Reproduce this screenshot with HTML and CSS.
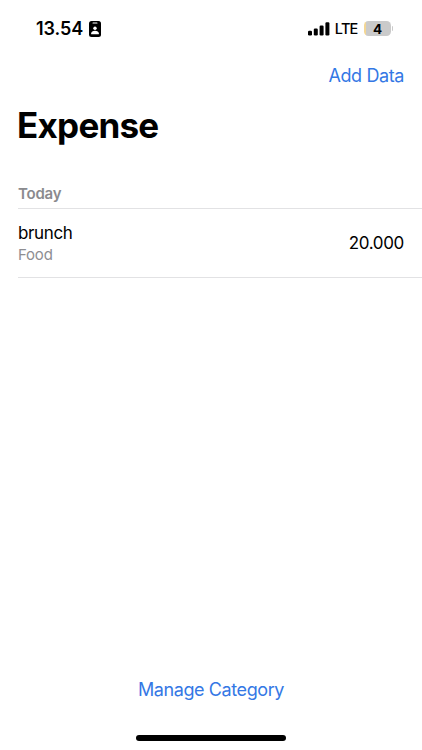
FILE: index.html
```html
<!DOCTYPE html>
<html lang="en">
<head>
<meta charset="utf-8">
<title>Expense</title>
<link rel="stylesheet" href="styles.css">
</head>
<body>
<div class="status">
  <div class="status-left"><span class="time">13.54</span>
    <svg class="badge" width="12" height="16" viewBox="0 0 12 16"><rect width="12" height="16" rx="2.5"/><rect x="3.5" y="1.4" width="5" height="1.1" rx=".55" fill="#fff"/><circle cx="6" cy="7.2" r="1.7" fill="#fff"/><path d="M2.2 13.2v-1c0-1.5 1.6-2.5 3.8-2.5s3.8 1 3.8 2.5v1z" fill="#fff"/></svg>
  </div>
  <div class="status-right">
    <svg class="signal" width="22" height="14" viewBox="0 0 22 14"><rect x="0" y="8.8" width="4" height="4.7" rx="1.2"/><rect x="5.8" y="6.5" width="4" height="7" rx="1.2"/><rect x="11.6" y="3.6" width="4" height="9.9" rx="1.2"/><rect x="17.4" y="0.3" width="4" height="13.2" rx="1.2"/></svg>
    <span class="lte">LTE</span>
    <span class="battery"><span class="level">4</span></span>
  </div>
</div>
<nav class="nav"><a class="link">Add Data</a></nav>
<h1 class="title">Expense</h1>
<main class="list">
  <h2 class="section">Today</h2>
  <div class="row">
    <div class="info"><span class="name">brunch</span><span class="category">Food</span></div>
    <span class="amount">20.000</span>
  </div>
</main>
<footer class="footer"><a class="link manage">Manage Category</a><div class="home"></div></footer>
</body>
</html>
```
FILE: styles.css
```css
* { box-sizing: border-box; }
body { margin: 0; height: 750px; display: flex; flex-direction: column; background: #fff; color: #000; font-family: Inter, sans-serif; overflow: hidden; }
.status { height: 57px; padding: 0 31px 0 36px; display: flex; justify-content: space-between; align-items: center; }
.status-left, .status-right { display: flex; align-items: center; }
.time { font-size: 18px; font-weight: 600; margin-right: 6px; letter-spacing: -0.05px; }
.lte { font-size: 14.5px; font-weight: 500; letter-spacing: -0.8px; margin: 0 6.5px 0 5px; }
.battery { width: 27px; height: 15px; border-radius: 4.5px; background: linear-gradient(90deg, #f3d694 1.5px, #cacaca 1.5px); display: flex; align-items: center; justify-content: center; position: relative; }
.battery::after { content: ""; position: absolute; left: 28px; top: 5px; width: 1px; height: 5px; border-radius: 0 2px 2px 0; background: #cacaca; }
.level { font-size: 13.5px; font-weight: 700; }
.nav { height: 36px; padding: 0 18px; display: flex; align-items: center; justify-content: flex-end; }
.link { color: #3478e5; font-size: 18px; letter-spacing: -0.4px; }
.title { margin: 0; height: 64px; padding: 0 17px; font-size: 35px; line-height: 64px; font-weight: 700; letter-spacing: -0.75px; }
.list { padding-left: 18px; flex: 1; }
.section { margin: 0; height: 52px; padding-top: 27px; line-height: 20px; font-size: 15px; font-weight: 600; letter-spacing: -0.2px; color: #8a8a8e; border-bottom: 1px solid #e2e2e4; }
.row { height: 69px; padding-right: 18px; display: flex; align-items: center; justify-content: space-between; border-bottom: 1px solid #e2e2e4; }
.info { display: flex; flex-direction: column; line-height: 22px; padding-top: 2px; }
.name, .amount { font-size: 17px; letter-spacing: -0.35px; }
.category { font-size: 15px; letter-spacing: -0.2px; color: #8e8e92; }
.footer { height: 71px; display: flex; flex-direction: column; align-items: center; }
.manage { line-height: 22px; }
.home { width: 150px; height: 5.5px; border-radius: 3px; background: #000; margin-top: 34px; }
```
